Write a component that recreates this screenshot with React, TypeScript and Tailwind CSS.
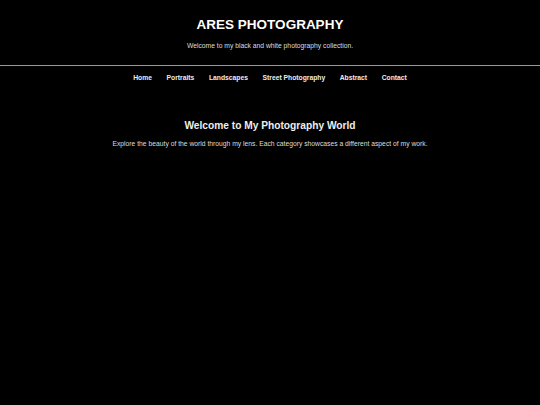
export default function App() {
  return (
    <div className="min-h-[405px] w-full bg-black text-white" style={{ fontFamily: '"Liberation Sans", Arial, sans-serif' }}>
      <header className="pt-[17px] pb-[15px] text-center border-b border-[#999]">
        <h1 className="text-[13.5px] leading-[15px] font-bold">ARES PHOTOGRAPHY</h1>
        <p className="mt-[10px] text-[6.75px] leading-[8px] text-[#ddd]">Welcome to my black and white photography collection.</p>
      </header>
      <nav className="flex justify-center gap-[14.6px] pt-[8px] text-[6.75px] leading-[8px] font-bold text-[#eee]">
        <span>Home</span>
        <span>Portraits</span>
        <span>Landscapes</span>
        <span>Street Photography</span>
        <span>Abstract</span>
        <span>Contact</span>
      </nav>
      <main className="mt-[38px] text-center">
        <h2 className="text-[10.2px] leading-[12px] font-bold text-[#eee]">Welcome to My Photography World</h2>
        <p className="mt-[8px] text-[6.75px] leading-[8px] text-[#ddd]">Explore the beauty of the world through my lens. Each category showcases a different aspect of my work.</p>
      </main>
    </div>
  );
}
